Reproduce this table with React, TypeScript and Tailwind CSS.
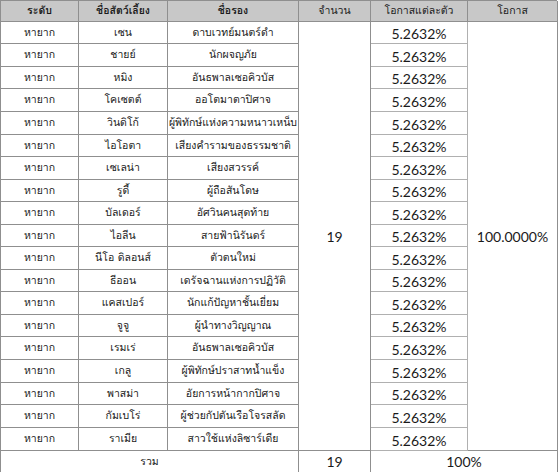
const pets = [
  ["เซน", "ดาบเวทย์มนตร์ดำ"],
  ["ชายย์", "นักผจญภัย"],
  ["หมิง", "อันธพาลเซอคิวบัส"],
  ["โคเซตต์", "ออโตมาตาปิศาจ"],
  ["วินดิโก้", "ผู้พิทักษ์แห่งความหนาวเหน็บ"],
  ["ไอโอตา", "เสียงคำรามของธรรมชาติ"],
  ["เซเลน่า", "เสียงสวรรค์"],
  ["รูดี้", "ผู้ถือสันโดษ"],
  ["บัลเดอร์", "อัศวินคนสุดท้าย"],
  ["ไอลีน", "สายฟ้านิรันดร์"],
  ["นีโอ ดิลอนส์", "ตัวตนใหม่"],
  ["ธีออน", "เดรัจฉานแห่งการปฏิวัติ"],
  ["แคสเปอร์", "นักแก้ปัญหาชั้นเยี่ยม"],
  ["จูจู", "ผู้นำทางวิญญาณ"],
  ["เรมเร่", "อันธพาลเซอคิวบัส"],
  ["เกลู", "ผู้พิทักษ์ปราสาทน้ำแข็ง"],
  ["พาสม่า", "อัยการหน้ากากปิศาจ"],
  ["กัมเบโร่", "ผู้ช่วยกัปตันเรือโจรสลัด"],
  ["ราเมีย", "สาวใช้แห่งลิซาร์เดีย"],
];

const thai = "font-['Tahoma','Loma','Garuda','Noto_Sans_Thai','DejaVu_Sans',sans-serif] text-[10.5px]";
const num = "font-['Lato','Open_Sans',sans-serif] text-[14px]";
const cell = "flex items-center justify-center border-r border-b border-[#8f8f8f]";
const pctCell = "flex items-center justify-center border-r border-b border-[#b0b0b0]";

export default function App() {
  return (
    <div className="w-[558px] h-[472px] bg-white text-[#1a1a1a]">
      <div className="grid grid-cols-[78px_89px_131px_72px_97px_90px] grid-rows-[21px_22px_23px_22px_23px_23px_22px_23px_22px_23px_22px_23px_22px_23px_22px_23px_23px_22px_23px_23px_22px] border-t border-l border-[#8f8f8f] w-[557px]">
        {/* header */}
        {["ระดับ", "ชื่อสัตว์เลี้ยง", "ชื่อรอง", "จำนวน", "โอกาสแต่ละตัว", "โอกาส"].map((h, i) => (
          <div key={h} className={`${cell} bg-[#c8c8c8] ${thai} ${i < 3 ? "font-bold" : ""}`}>
            {h}
          </div>
        ))}

        {pets.map(([name, title], i) => (
          <div key={name} className="contents">
            <div className={`${cell} ${thai}`} style={{ gridRow: i + 2, gridColumn: 1 }}>
              หายาก
            </div>
            <div className={`${cell} ${thai}`} style={{ gridRow: i + 2, gridColumn: 2 }}>
              {name}
            </div>
            <div className={`${cell} ${thai} whitespace-nowrap`} style={{ gridRow: i + 2, gridColumn: 3 }}>
              {title}
            </div>
            <div className={`${pctCell} ${num} pt-[2px]`} style={{ gridRow: i + 2, gridColumn: 5 }}>
              5.2632%
            </div>
          </div>
        ))}

        <div className={`${cell} ${num} col-start-4 row-start-2 row-span-19`}>19</div>
        <div className={`${cell} ${num} col-start-6 row-start-2 row-span-19`}>100.0000%</div>

        {/* total row */}
        <div className={`${cell} ${thai} col-span-3 row-start-21`}>รวม</div>
        <div className={`${cell} ${num} col-start-4 row-start-21`}>19</div>
        <div className={`${cell} ${num} col-start-5 col-span-2 row-start-21`}>100%</div>
      </div>
    </div>
  );
}
